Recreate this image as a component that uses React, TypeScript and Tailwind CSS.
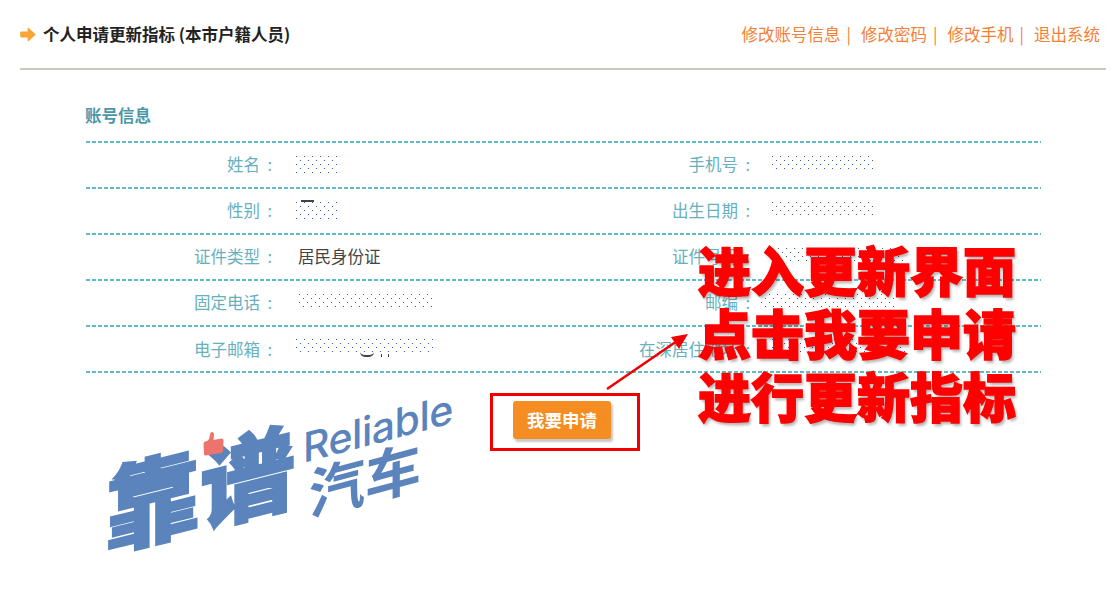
const cjk = "font-['Noto_Sans_CJK_SC','Noto_Sans',sans-serif]";

const mosaic =
  "bg-[radial-gradient(circle_at_0.5px_0.5px,#3358c8_0.6px,transparent_0.7px),radial-gradient(circle_at_0.5px_0.5px,#3358c8_0.6px,transparent_0.7px)] bg-[length:8px_8px] bg-[position:0_0,4px_4px]";

const dash =
  "bg-[linear-gradient(90deg,#5dbcc8_4px,transparent_4px)] bg-[length:6px_2px] bg-repeat-x";

const Dots: React.FC<{ className: string }> = ({ className }) => (
  <div className={`${mosaic} ${className}`} />
);

type Cell = { label: string; value: React.ReactNode };

const rows: Array<[Cell, Cell]> = [
  [
    { label: "姓名", value: <Dots className="ml-[-2px] w-[43px] h-[17px]" /> },
    { label: "手机号", value: <Dots className="w-[103px] h-[16px] mb-[1px]" /> },
  ],
  [
    {
      label: "性别",
      value: (
        <div className="relative ml-[-2px] mt-[3px] w-[43px] h-[20px]">
          <div className="absolute left-[5px] top-[-2px] w-[13px] h-[2px] bg-[#444]" />
          <Dots className="w-full h-full" />
        </div>
      ),
    },
    { label: "出生日期", value: <Dots className="w-[103px] h-[16px] mb-[1px]" /> },
  ],
  [
    {
      label: "证件类型",
      value: <span className="text-[#444]">居民身份证</span>,
    },
    { label: "证件号码", value: <Dots className="ml-[6px] w-[128px] h-[16px]" /> },
  ],
  [
    { label: "固定电话", value: <Dots className="ml-[1px] w-[136px] h-[16px]" /> },
    { label: "邮编", value: <Dots className="ml-[-11px] w-[136px] h-[16px]" /> },
  ],
  [
    {
      label: "电子邮箱",
      value: (
        <div className="relative ml-[-2px] mb-[4px] w-[139px] h-[16px]">
          <Dots className="w-full h-full" />
          <div className="absolute left-[64px] top-[13px] w-[14px] h-[5px] border-b-2 border-[#444] rounded-b-full" />
          <div className="absolute left-[85px] top-[15px] w-[1px] h-[3px] bg-[#444]" />
          <div className="absolute left-[92px] top-[15px] w-[1px] h-[3px] bg-[#444]" />
        </div>
      ),
    },
    { label: "在深居住地址", value: <Dots className="mb-[4px] w-[134px] h-[16px]" /> },
  ],
];

const Label: React.FC<{ text: string }> = ({ text }) => (
  <div className="flex justify-end text-[#67b0bd]">
    {text}
    <span className="w-[15px] text-right pr-[3px]">:</span>
  </div>
);

const links = ["修改账号信息", "修改密码", "修改手机", "退出系统"];

export default function App() {
  return (
    <div className={`relative w-[1116px] h-[605px] overflow-hidden bg-white ${cjk} text-[16.5px]`}>
      <div className="ml-[20px] mr-[10px] h-[70px] pr-[6px] flex items-center justify-between border-b-2 border-[#c9c9c2]">
        <div className="flex items-center gap-[7px]">
          <svg width="16" height="15" viewBox="0 0 16 15">
            <path
              d="M8.5 0.8 L15.8 7.5 L8.5 14.2 Q7.6 14.4 7.6 13.4 L7.6 10.6 L1.5 10.6 Q0.2 10.6 0.2 9.2 L0.2 5.8 Q0.2 4.4 1.5 4.4 L7.6 4.4 L7.6 1.6 Q7.6 0.6 8.5 0.8 Z"
              fill="#f9a436"
            />
          </svg>
          <h1 className="font-bold text-[#222]">个人申请更新指标 (本市户籍人员)</h1>
        </div>
        <div className="flex items-center text-[#f47f35]">
          {links.map((l, i) => (
            <span key={l} className="flex items-center">
              {l}
              {i < links.length - 1 && <span className="ml-[6px] mr-[10px]">|</span>}
            </span>
          ))}
        </div>
      </div>

      <div className="ml-[85px] w-[956px]">
        <h2 className="mt-[32px] h-[39px] font-bold text-[#4b97aa] leading-[26px]">账号信息</h2>
        <div className={`${dash} bg-bottom`}>
          {rows.map(([a, b], i) => (
            <div
              key={a.label}
              className={`${dash} bg-top grid grid-cols-[190px_288px_190px_1fr] items-center ${
                i === 4 ? "h-[48px]" : "h-[46px]"
              }`}
            >
              <Label text={a.label} />
              <div className="pl-[23px]">{a.value}</div>
              <Label text={b.label} />
              <div className="pl-[19px]">{b.value}</div>
            </div>
          ))}
        </div>
      </div>

      {/* red box, button and arrow lie over the page */}
      <div className="absolute left-[490px] top-[393px] w-[150px] h-[58px] border-[3px] border-[#f00000]" />
      <button className="absolute left-[513px] top-[401px] w-[98px] h-[38px] rounded-[3px] bg-[#f68d22] shadow-[2px_3px_2px_#c9c9c9] text-white font-bold text-[17.5px]">
        我要申请
      </button>
      <svg className="absolute left-[600px] top-[325px]" width="96" height="72" viewBox="0 0 96 72">
        <path d="M7 64 L80 14" stroke="#f00000" strokeWidth="2.5" fill="none" />
        <path d="M88 9 L71 12 L79 24 Z" fill="#f00000" />
      </svg>

      <div className="absolute left-[698px] top-[238px] w-[330px] font-black text-[53px] leading-[63px] text-[#ff0000] [-webkit-text-stroke:1.5px_#ff0000] [text-shadow:2px_3px_3px_rgba(0,0,0,0.3)]">
        <div>进入更新界面</div>
        <div>点击我要申请</div>
        <div>进行更新指标</div>
      </div>

      {/* watermark logo, live text slanted upward */}
      <div className="absolute left-[105px] top-[429px] text-[#5b84bd] font-black text-[95px] leading-[110px] skew-y-[-14deg] [-webkit-text-stroke:2px_#5b84bd]">
        靠谱
      </div>
      <svg className="absolute left-[203px] top-[431px]" width="21" height="25" viewBox="0 0 21 25">
        <path
          d="M0.5 13 Q0.5 11 2 10.5 L5 9.5 Q6.5 8 7 3 Q7.5 0.8 9.5 1 Q11 1.5 11 4 L10.5 9 L18.5 7.5 Q20.5 7.5 20.5 9.5 L20 20 Q20 21.5 18 22 L2.5 24.5 Q1 24.5 1 23 Z"
          fill="#ec746c"
        />
      </svg>
      <div className="absolute left-[303px] top-[403px] text-[#5b84bd] font-medium font-['Inter',sans-serif] text-[41px] leading-[50px] tracking-[-0.5px] skew-y-[-15deg]">
        Reliable
      </div>
      <div className="absolute left-[309px] top-[446px] text-[#5b84bd] font-bold text-[56px] leading-[62px] skew-y-[-15deg]">
        汽车
      </div>
    </div>
  );
}
